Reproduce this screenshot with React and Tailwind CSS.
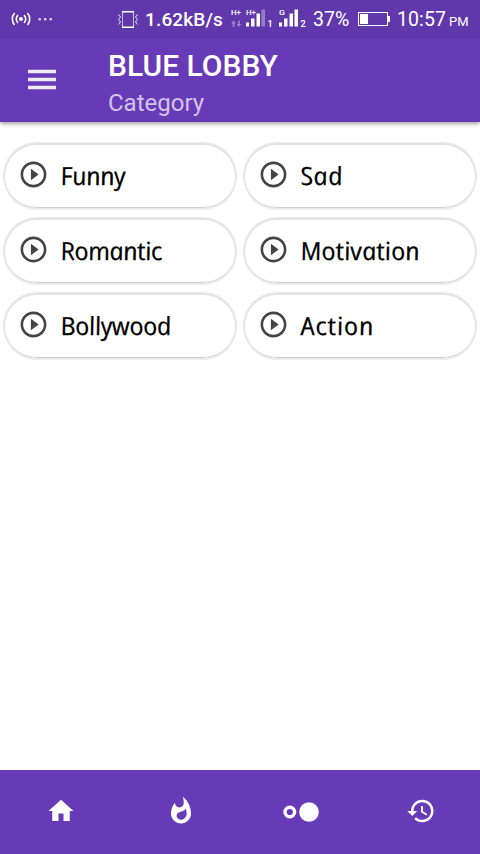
import React from "react";
import { MdPlayCircleOutline, MdHome, MdWhatshot, MdHistory } from "react-icons/md";

const categories = [
  { name: "Funny", cls: "tracking-[-0.4px]" },
  { name: "Sad", cls: "tracking-[0.4px]" },
  { name: "Romantic", cls: "tracking-[-0.4px]" },
  { name: "Motivation", cls: "tracking-[0.1px]" },
  { name: "Bollywood", cls: "tracking-[-0.35px]" },
  { name: "Action", cls: "tracking-[0.9px]" },
];

function Signal({ label, sim, weak }) {
  return (
    <svg width="28" height="22" viewBox="0 0 28 22" fill="#fff">
      <text x="0" y="6.5" fontSize="8" fontWeight="500" textLength={label.length > 1 ? 10 : 6} lengthAdjust="spacingAndGlyphs">{label}</text>
      <rect x="0" y="14.5" width="3" height="4" />
      <rect x="5" y="10.5" width="3.5" height="8" />
      <rect x="10.5" y="5.5" width="3.5" height="13" />
      <rect x="15.5" y="1.5" width="3.5" height="17" opacity={weak ? 0.35 : 1} />
      <text x="21.5" y="18.5" fontSize="9" fontWeight="600">{sim}</text>
    </svg>
  );
}

function StatusBar() {
  return (
    <div className="flex h-[38px] items-center bg-[#6038ab] text-white">
      <svg className="ml-[11px]" width="20" height="16" viewBox="0 0 20 16" fill="none" stroke="#fff" strokeWidth="1.6">
        <circle cx="10" cy="8" r="2" fill="#fff" stroke="none" />
        <path d="M7 4.2a5 5 0 0 0 0 7.6M13 4.2a5 5 0 0 1 0 7.6M3.6 2a9 9 0 0 0 0 12M16.4 2a9 9 0 0 1 0 12" />
      </svg>
      <svg className="ml-[7px]" width="15" height="4" viewBox="0 0 15 4" fill="#ddd0f0">
        <rect x="0.5" y="1" width="2.4" height="2.4" /><rect x="6" y="1" width="2.4" height="2.4" /><rect x="11.5" y="1" width="2.4" height="2.4" />
      </svg>
      <svg className="ml-[65px]" width="21" height="17" viewBox="0 0 21 17" fill="none" stroke="#fff" strokeWidth="1">
        <path d="M4.5 1v15M15.5 1v15" opacity=".65" />
        <path d="M4 .8h12M4 16.2h12" strokeWidth="1.4" />
        <path d="M.5 3.5l2 2.5-2 2.5 2 2.5-2 2.5M19.5 3.5l-2 2.5 2 2.5-2 2.5 2 2.5" opacity=".9" />
      </svg>
      <span className="ml-[6px] w-[78px] whitespace-nowrap text-[19px] leading-none font-medium tracking-[0.15px]">1.62kB/s</span>
      <svg className="ml-[8px]" width="11" height="22" viewBox="0 0 11 22" fill="#fff">
        <text x="0" y="6.5" fontSize="8" fontWeight="500" textLength="10" lengthAdjust="spacingAndGlyphs">H+</text>
        <path d="M2.5 12.5l2.4 3H3.3v3.5H1.7v-3.5H.1zM8 19l-2.4-3h1.6v-3.5h1.6V16h1.6z" opacity=".4" />
      </svg>
      <div className="ml-[4px] flex gap-[5px]">
        <Signal label="H+" sim="1" weak />
        <Signal label="G" sim="2" />
      </div>
      <span className="mt-[2px] ml-[6px] w-[38px] whitespace-nowrap text-[19.5px] leading-none">37%</span>
      <svg className="ml-[7px]" width="33" height="14" viewBox="0 0 33 14" fill="#fff">
        <rect x="0.5" y="0.5" width="29" height="13" fill="none" stroke="#fff" />
        <rect x="2" y="2" width="8" height="10" />
        <rect x="30" y="4" width="2" height="6" />
      </svg>
      <span className="mt-px ml-[6px] w-[49px] whitespace-nowrap text-[19.5px] leading-none tracking-[0.1px]">10:57</span>
      <span className="mt-[5px] ml-[3px] text-[13px] leading-none">PM</span>
    </div>
  );
}

function Card({ name, cls }) {
  return (
    <div className="flex h-[67px] items-center rounded-[34px] border border-[#e9e9e9] bg-white pl-[14px] shadow-[0_1px_1px_rgba(0,0,0,0.08),inset_0_1px_0_1px_#e2e2e2,inset_0_-1px_0_0_#d0d0d0]">
      <MdPlayCircleOutline size={31} className="-mt-[3px] shrink-0 text-[#444]" />
      <span className={"ml-[11px] -mt-px origin-left skew-x-[11deg] font-['Open_Sans','Noto_Sans',sans-serif] text-[25px] leading-none font-medium text-black italic [-webkit-text-stroke:0.25px_black] " + cls}>
        {name}
      </span>
    </div>
  );
}

export default function App() {
  return (
    <div className="flex h-[854px] w-[480px] flex-col overflow-hidden bg-white font-[Roboto,sans-serif]">
      <StatusBar />
      <header className="z-10 flex h-[84px] shrink-0 bg-[#673ab7] text-white shadow-[0_2px_4px_rgba(0,0,0,0.35)]">
        <div className="mt-[31px] ml-[28px] flex h-[21px] w-[28px] flex-col justify-between">
          <i className="h-[5px] border-y border-[#8a68c8] bg-[#f1ebf9]" />
          <i className="h-[5px] border-y border-[#8a68c8] bg-[#f1ebf9]" />
          <i className="h-[5px] border-y border-[#8a68c8] bg-[#f1ebf9]" />
        </div>
        <div className="ml-[52px] pt-[10px]">
          <h1 className="text-[30px] leading-[36px] font-medium">BLUE LOBBY</h1>
          <p className="mt-[4px] text-[24px] leading-[30px] text-[#d1c4e9]">Category</p>
        </div>
      </header>
      <main className="grid flex-1 grid-cols-2 content-start gap-x-[6px] gap-y-2 px-[3px] pt-[20px]">
        {categories.map((c) => <Card key={c.name} {...c} />)}
      </main>
      <nav className="grid h-[84px] shrink-0 grid-cols-4 items-center justify-items-center bg-[#673ab7] pl-[2px] text-white">
        <MdHome size={30} className="mr-[2px] mb-[2px]" />
        <MdWhatshot size={30} className="mb-[2px]" />
        <svg width="38" height="22" viewBox="0 0 38 22" fill="#fff">
          <circle cx="7.8" cy="11" r="4.8" fill="none" stroke="#fff" strokeWidth="3.4" />
          <circle cx="27" cy="11" r="9.8" />
        </svg>
        <MdHistory size={30} className="mb-[2px] ml-[2px]" />
      </nav>
    </div>
  );
}
